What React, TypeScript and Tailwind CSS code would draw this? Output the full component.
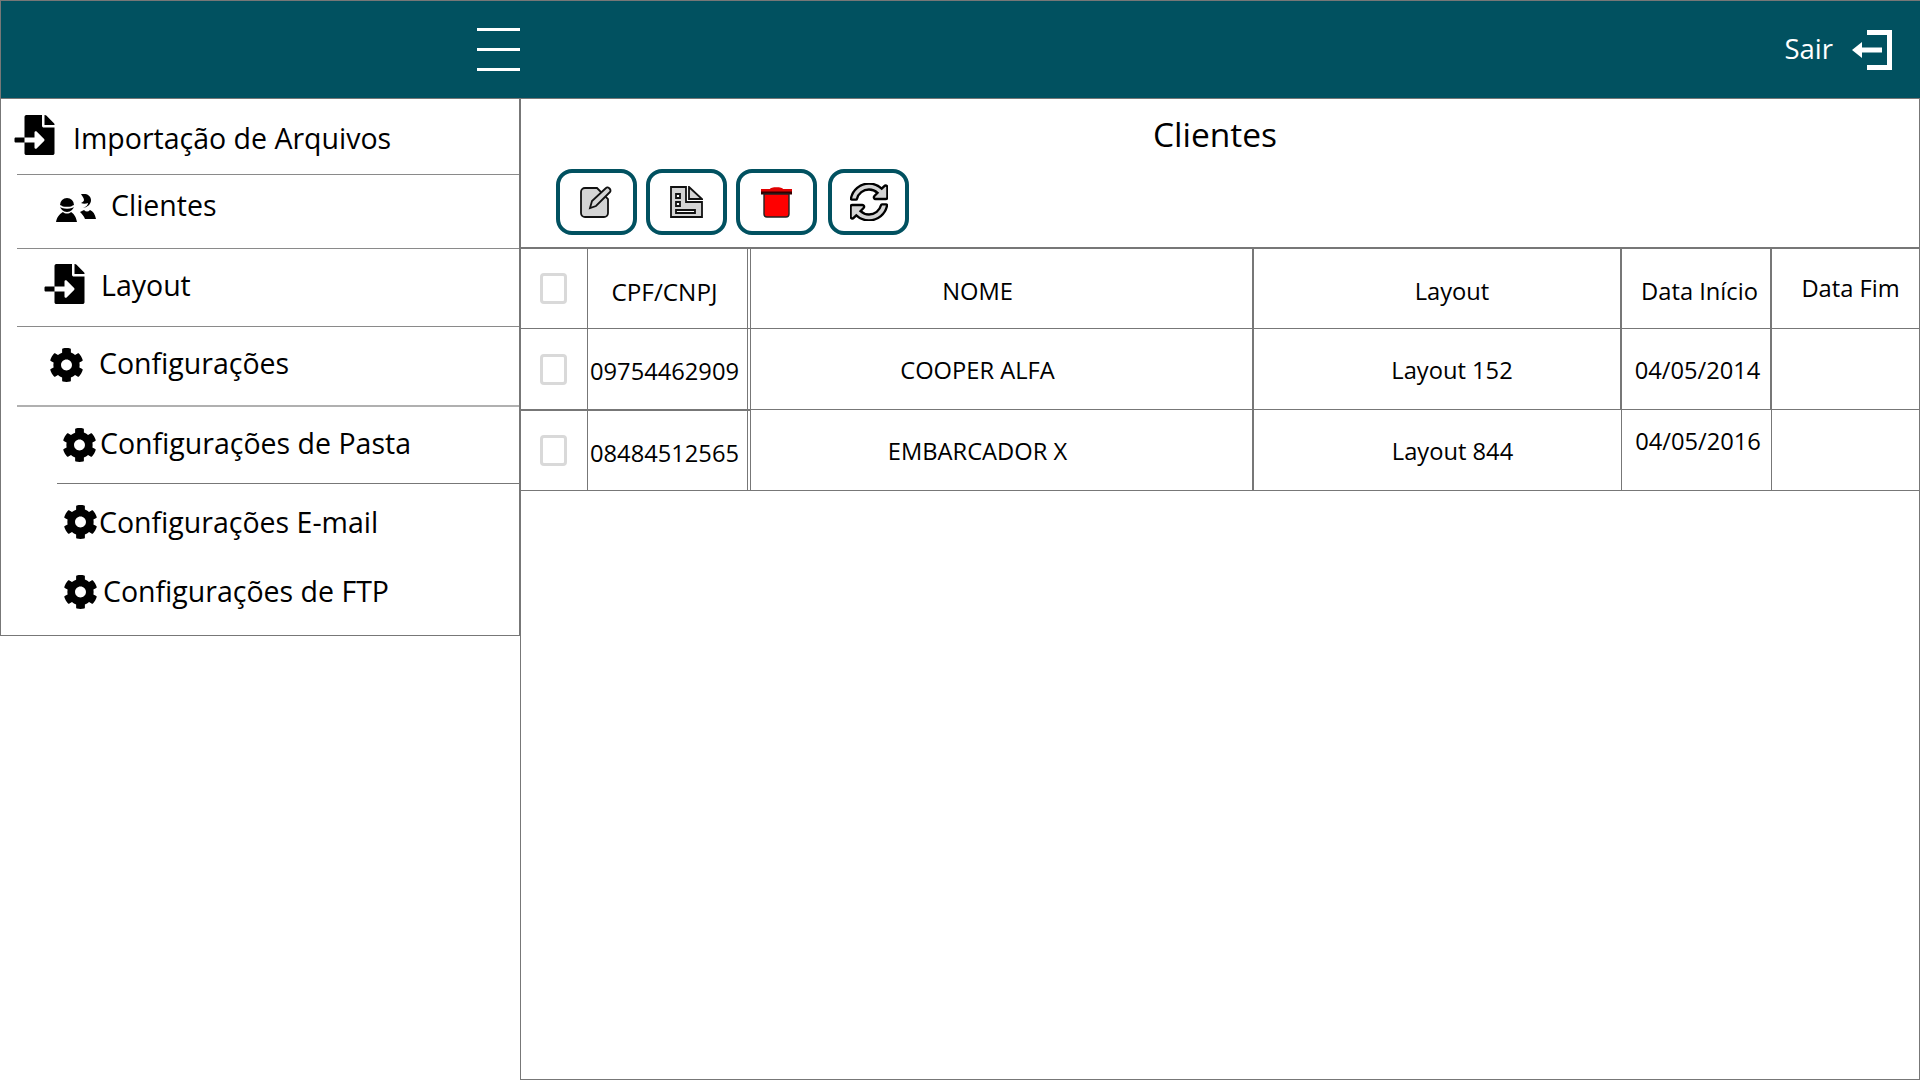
import { FaCog, FaFileImport, FaSyncAlt } from "react-icons/fa";

const BORDER = "border-[#777777]";

function ClientesIcon() {
  return (
    <svg viewBox="0 0 40 28" className="w-[40px] h-[28px] shrink-0" fill="black">
      <circle cx="11" cy="11" r="7" />
      <path d="M4 11.500c2 3 12 3 14 0" stroke="white" strokeWidth="1.800" fill="none" />
      <path d="M0 28c1-6 5-9 7-10 2 2 6 2 8 0 2 1 5 4 6 10z" />
      <path d="M25 0c6-1 10 2 10 6 0 4-3 7-8 8 3-1 5-3 5-5-2 1-5 1-7 0 2-1 3-2 3-3 0-2-2-4-3-6z" />
      <path d="M24 18l4-2c2 2 4 2 6 0 3 1 5 4 6 9H29c-1-3-3-5-5-7z" />
    </svg>
  );
}

function SairIcon() {
  return (
    <svg viewBox="0 0 40 40" className="w-[40px] h-[40px]" fill="white">
      <path d="M15 0h25v40H15v-5h20V5H15z" />
      <path d="M0 20l10-8v5.500h20v5H10V28z" />
    </svg>
  );
}

function EditIcon() {
  return (
    <svg viewBox="0 0 33 32" className="w-[33px] h-[32px]">
      <path d="M17 2H5a4 4 0 0 0-4 4v21a4 4 0 0 0 4 4h19a4 4 0 0 0 4-4V13z" fill="#d4d4d4" stroke="#111" strokeWidth="1.800" />
      <path d="M10 22l2-7L26 2c2-2 6 2 4 4L16 20z" fill="#d4d4d4" stroke="#111" strokeWidth="1.800" />
    </svg>
  );
}

function LayoutIcon() {
  return (
    <svg viewBox="0 0 33 32" className="w-[33px] h-[32px]" fill="#d4d4d4" stroke="#111" strokeWidth="1.800">
      <path d="M1 1h15v15h16v15H1z" />
      <path d="M19 1l13 12H19z" />
      <path d="M6 8h4v4H6zM6 16h4v4H6zM6 24h19v3H6z" fill="white" />
    </svg>
  );
}

function TrashIcon() {
  return (
    <svg viewBox="0 0 33 32" className="w-[33px] h-[32px]">
      <path d="M10 3c0-2.500 13-2.500 13 0h9v5H1V3z" fill="#e00000" />
      <rect x="1" y="5.500" width="31" height="3" fill="#300" />
      <path d="M4 8h25v20a3 3 0 0 1-3 3H7a3 3 0 0 1-3-3z" fill="#ff0000" stroke="#222" strokeWidth="1.400" />
    </svg>
  );
}

function ToolButton({ children, className }: { children: React.ReactNode; className: string }) {
  return (
    <button className={`h-[66px] w-[81px] flex items-center justify-center rounded-[16px] border-4 border-[#015160] bg-white ${className}`}>
      {children}
    </button>
  );
}

function SideRow({ className, icon, label }: { className: string; icon: React.ReactNode; label: string }) {
  return (
    <div className={`flex items-center text-[28.5px] text-black ${className}`}>
      {icon}
      <span className="pb-[4px]">{label}</span>
    </div>
  );
}

function Check({ className = "" }: { className?: string }) {
  return <span className={`block w-[27px] h-[31px] rounded-[4px] border-[3px] border-[#d9d9d9] bg-white ${className}`} />;
}

export default function App() {
  return (
    <div className="w-[1920px] h-[1080px] overflow-hidden bg-white flex flex-col" style={{ fontFamily: '"Open Sans", "Noto Sans", sans-serif' }}>
      {/* barra superior */}
      <header className={`h-[99px] shrink-0 bg-[#015160] border-t border-l border-b ${BORDER} flex items-center pl-[476px] pr-[28px]`}>
        <div className="flex flex-col gap-[17px]">
          <span className="block w-[43px] h-[3px] bg-white" />
          <span className="block w-[43px] h-[3px] bg-white" />
          <span className="block w-[43px] h-[3px] bg-white" />
        </div>
        <div className="ml-auto flex items-center gap-[19px] text-white">
          <span className="text-[27.5px] pb-[2px]">Sair</span>
          <SairIcon />
        </div>
      </header>

      <div className="flex flex-1 min-h-0">
        {/* menu lateral */}
        <aside className={`w-[520px] h-[537px] shrink-0 border-l border-b border-r ${BORDER} flex flex-col`}>
          <SideRow className="h-[76px] ml-[16px] pt-[8px] border-b border-[#8a8a8a]" label="Importação de Arquivos"
            icon={<FaFileImport className="w-[41px] h-[40px] mb-[11px] mr-[18px] -ml-[3px] shrink-0" />} />
          <SideRow className="h-[74px] ml-[16px] pl-[39px] pb-[9px] border-b border-[#8a8a8a]" label="Clientes"
            icon={<span className="mr-[15px] mt-[2px]"><ClientesIcon /></span>} />
          <SideRow className="h-[78px] ml-[16px] pl-[27px] border-b border-[#8a8a8a]" label="Layout"
            icon={<FaFileImport className="w-[41px] h-[40px] mb-[8px] mr-[16px] shrink-0" />} />
          <SideRow className="h-[80px] ml-[16px] pl-[32px] pb-[2px] border-b-2 border-[#b0b0b0]" label="Configurações"
            icon={<FaCog className="w-[35px] h-[36px] mr-[15px] shrink-0" />} />
          <SideRow className="h-[77px] ml-[56px] pl-[5px] border-b border-[#777777]" label="Configurações de Pasta"
            icon={<FaCog className="w-[35px] h-[36px] mr-[3px] shrink-0" />} />
          <SideRow className="h-[72px] ml-[62px] pt-[8px]" label="Configurações E-mail"
            icon={<FaCog className="w-[35px] h-[36px] mb-[4px] mr-[1px] shrink-0" />} />
          <SideRow className="h-[68px] ml-[62px] pt-[7px]" label="Configurações de FTP"
            icon={<FaCog className="w-[35px] h-[36px] mb-[4px] mr-[5px] shrink-0" />} />
        </aside>

        {/* conteudo */}
        <main className={`flex-1 min-w-0 border-l border-r border-b ${BORDER} flex flex-col`}>
          <h1 className="h-[70px] shrink-0 flex items-center justify-center pr-[10px] text-[33.5px] font-normal text-black">Clientes</h1>
          <div className="h-[78px] shrink-0 flex pl-[35px] items-start">
            <ToolButton className="mr-[9px]"><EditIcon /></ToolButton>
            <ToolButton className="mr-[9px]"><LayoutIcon /></ToolButton>
            <ToolButton className="mr-[11px]"><TrashIcon /></ToolButton>
            <ToolButton className=""><FaSyncAlt className="w-[38px] h-[38px] fill-[#d4d4d4] stroke-black [stroke-width:32px]" /></ToolButton>
          </div>

          <div className={`grid grid-cols-[67px_160px_2px_504px_368px_150px_1fr] grid-rows-[79px_81px_81px] text-[23.7px] text-black border-t-2 border-b ${BORDER}`}>
            <div className={`border-r ${BORDER} flex justify-center pt-[24px] pr-[2px]`}><Check /></div>
            <div className={`border-r ${BORDER} flex items-center justify-center pt-[7px] pr-[6px] text-[24.3px]`}>CPF/CNPJ</div>
            <div className="" />
            <div className={`border-l border-r-2 ${BORDER} flex items-center justify-center pt-[7px] pr-[48px]`}>NOME</div>
            <div className={`border-r-2 ${BORDER} flex items-center justify-center pt-[7px] pl-[30px]`}>Layout</div>
            <div className={`border-r-2 ${BORDER} flex items-center justify-center pt-[7px] pl-[7px]`}>Data Início</div>
            <div className="flex items-center justify-center pt-[1px] pl-[10px]">Data Fim</div>

            <div className={`border-t border-r ${BORDER} flex justify-center pt-[25px] pr-[2px]`}><Check /></div>
            <div className={`border-t border-r ${BORDER} flex items-center justify-center pt-[6px] pr-[6px]`}>09754462909</div>
            <div className={`border-t ${BORDER} bg-white`} />
            <div className={`border-t border-l border-r-2 ${BORDER} flex items-center justify-center pt-[4px] pr-[48px]`}>COOPER ALFA</div>
            <div className={`border-t border-r-2 ${BORDER} flex items-center justify-center pt-[4px] pl-[30px]`}>Layout 152</div>
            <div className={`border-t border-r-2 ${BORDER} flex items-center justify-center pt-[4px] pl-[3px]`}>04/05/2014</div>
            <div className={`border-t ${BORDER}`} />

            <div className={`border-t-2 border-r ${BORDER} flex justify-center pt-[24px] pr-[2px]`}><Check /></div>
            <div className={`border-t-2 border-r ${BORDER} flex items-center justify-center pt-[6px] pr-[6px]`}>08484512565</div>
            <div className={`border-t-2 ${BORDER}`} />
            <div className={`border-t border-l border-r-2 ${BORDER} flex items-center justify-center pt-[4px] pr-[48px]`}>EMBARCADOR X</div>
            <div className={`border-t border-r ${BORDER} flex items-center justify-center pt-[3px] pl-[30px]`}>Layout 844</div>
            <div className={`border-t border-r ${BORDER} flex items-center justify-center pb-[16px] pl-[3px]`}>04/05/2016</div>
            <div className={`border-t ${BORDER}`} />
          </div>
        </main>
      </div>
    </div>
  );
}
